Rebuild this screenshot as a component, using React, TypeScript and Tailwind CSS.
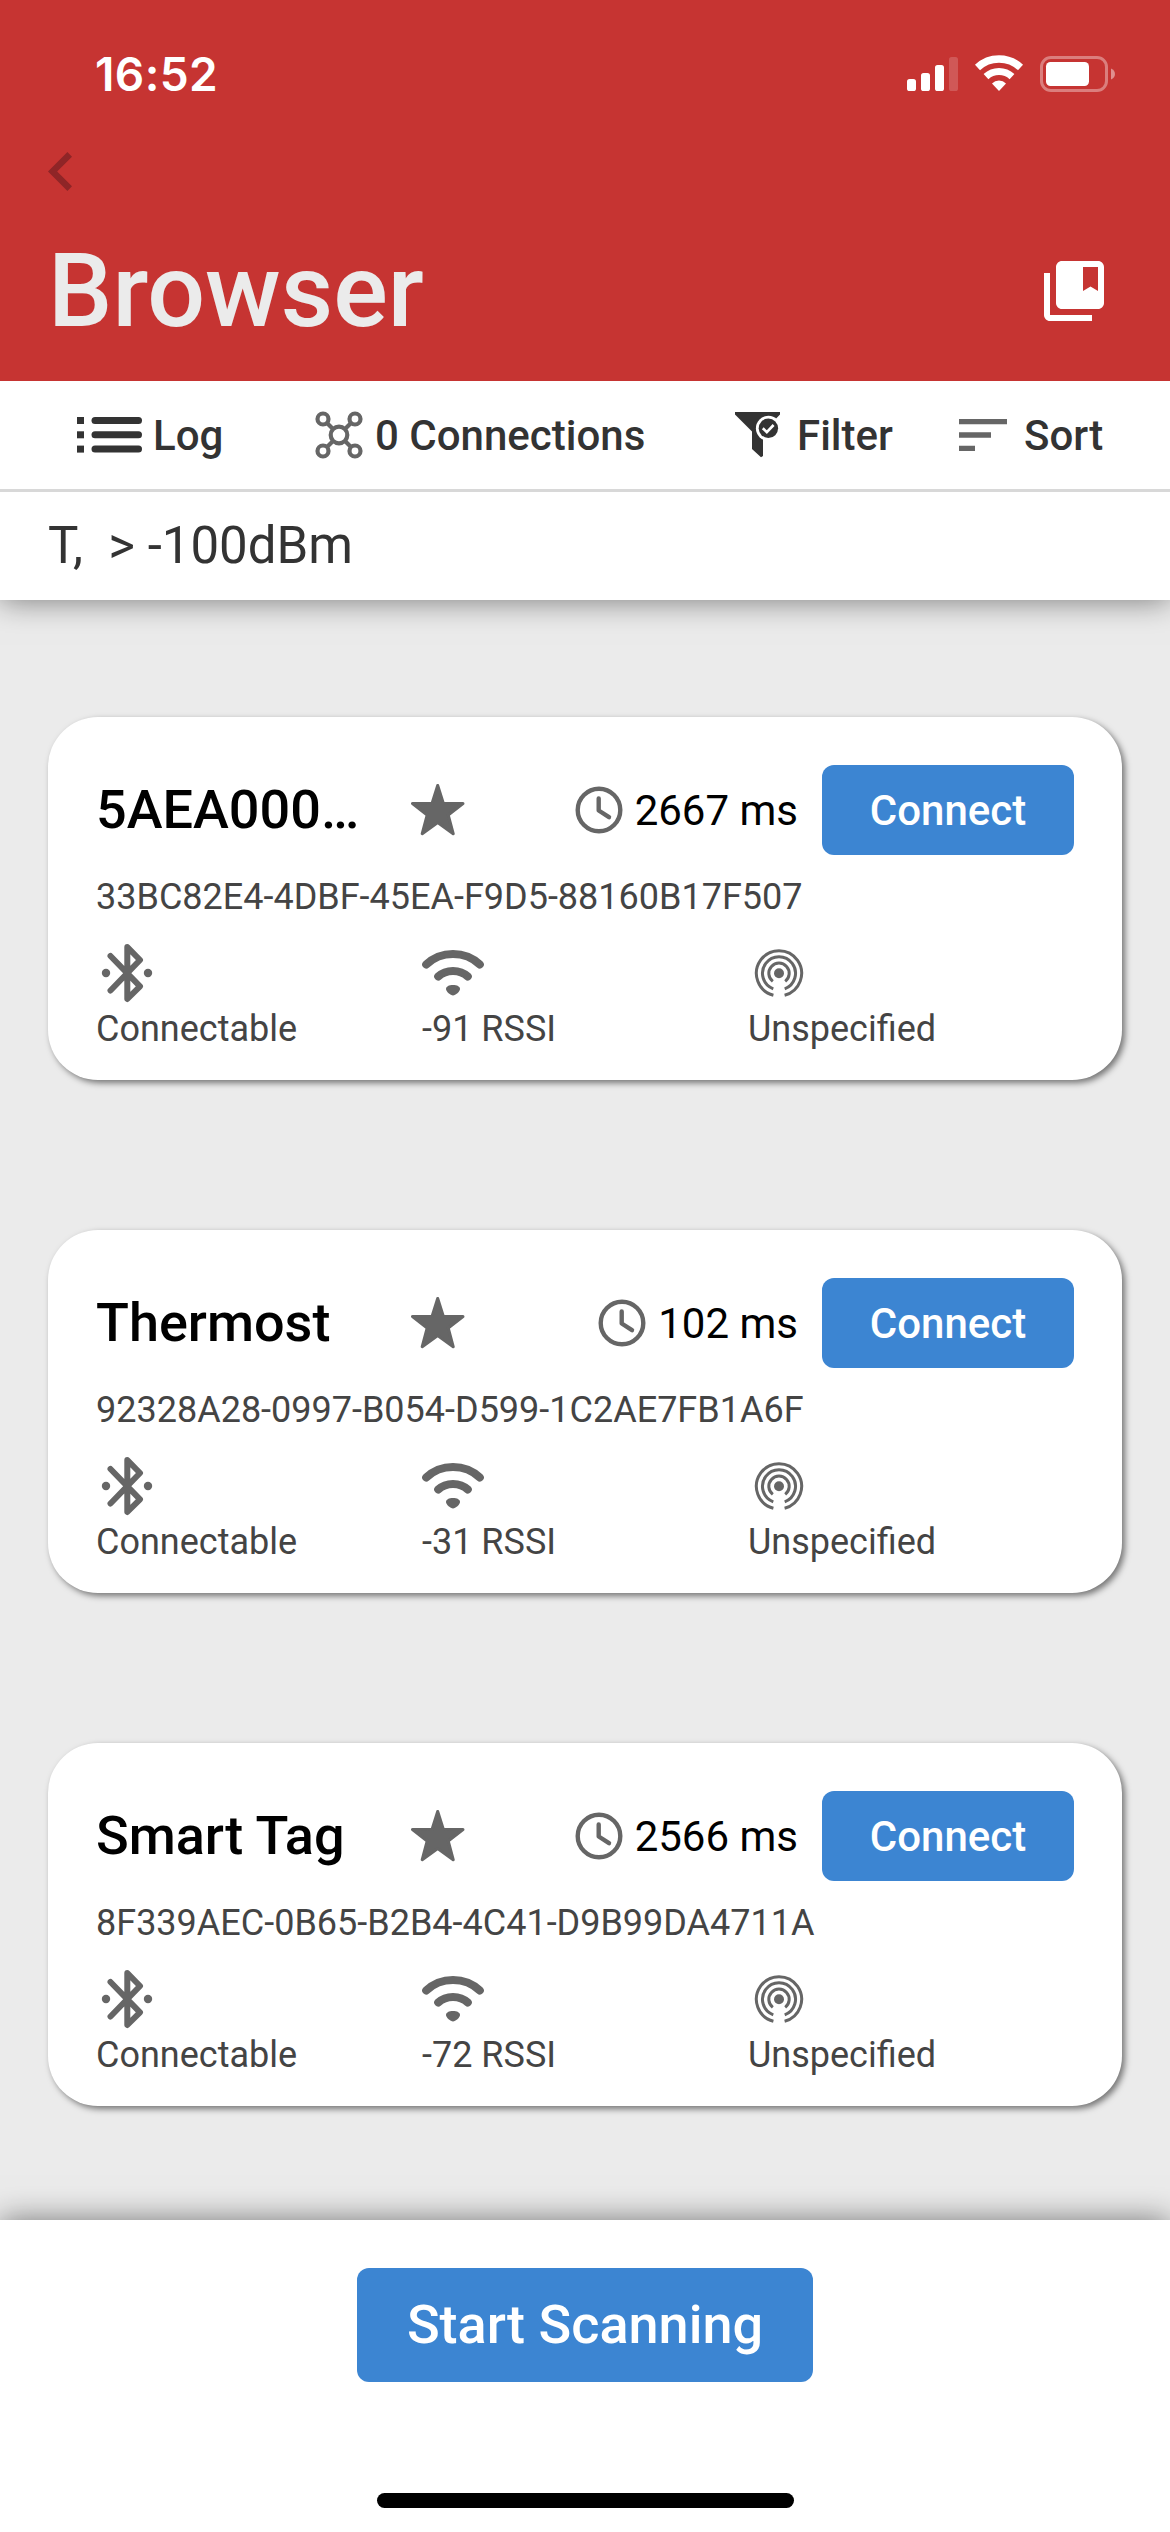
import React from "react";

type Device = { name: string; interval: string; uuid: string; rssi: string };

const devices: Device[] = [
  { name: "5AEA000…", interval: "2667 ms", uuid: "33BC82E4-4DBF-45EA-F9D5-88160B17F507", rssi: "-91 RSSI" },
  { name: "Thermost", interval: "102 ms", uuid: "92328A28-0997-B054-D599-1C2AE7FB1A6F", rssi: "-31 RSSI" },
  { name: "Smart Tag", interval: "2566 ms", uuid: "8F339AEC-0B65-B2B4-4C41-D9B99DA4711A", rssi: "-72 RSSI" },
];

function StatusIcons() {
  return (
    <svg className="h-[40px] w-[210px]" viewBox="906 54 210 40" fill="#fff">
      <rect x="907" y="79" width="9" height="12" rx="2.6" />
      <rect x="921" y="73" width="9" height="18" rx="2.6" />
      <rect x="935" y="65" width="9" height="26" rx="2.6" />
      <rect x="949" y="57" width="9" height="34" rx="2.6" opacity="0.18" />
      <g fill="none" stroke="#fff">
        <path d="M977.5 67.5A31.5 31.5 0 0 1 1020.5 67.5" strokeWidth="7.4" />
        <path d="M986 76.6A19 19 0 0 1 1012 76.6" strokeWidth="7" />
      </g>
      <path d="M999 91L992 83.4A10.2 10.2 0 0 1 1006 83.4Z" />
      <rect x="1041.5" y="57.5" width="65" height="33" rx="9.5" fill="none" stroke="#fff" strokeWidth="3" opacity="0.37" />
      <rect x="1046" y="62" width="43" height="24" rx="4.5" />
      <path d="M1111 68.5C1116.3 70.5 1116.3 77.5 1111 79.5Z" opacity="0.45" />
    </svg>
  );
}

function LogIcon() {
  return (
    <svg className="h-[38px] w-[66px]" viewBox="77 416 66 38" fill="#333">
      {[417, 431.3, 445.6].map((y) => (
        <g key={y}>
          <rect x="77" y={y} width="7" height="7" />
          <rect x="91.5" y={y} width="50.5" height="7" rx="3.5" />
        </g>
      ))}
    </svg>
  );
}

function ConnectionsIcon() {
  return (
    <svg className="h-[48px] w-[48px]" viewBox="0 0 48 48" fill="none" stroke="#666" strokeWidth="4.2">
      <circle cx="24" cy="24" r="8.3" />
      <circle cx="8" cy="8" r="5.5" />
      <circle cx="40" cy="8" r="5.5" />
      <circle cx="8" cy="40" r="5.5" />
      <circle cx="40" cy="40" r="5.5" />
      <path d="M12 12L18 18M36 12L30 18M12 36L18 30M36 36L30 30" />
    </svg>
  );
}

function FilterIcon() {
  return (
    <svg className="h-[46px] w-[46px]" viewBox="735 414 46 46">
      <path d="M735 414H780V416.5L763 434V458L761 459.3L752 451V433.5L735 416.5Z" fill="#333" />
      <circle cx="768.4" cy="430.3" r="12.5" fill="#fff" />
      <circle cx="768.4" cy="430.3" r="9.7" fill="#333" />
      <path d="M762.8 430.3L766.8 434.2L773.6 427" fill="none" stroke="#fff" strokeWidth="2.6" />
    </svg>
  );
}

function StarIcon() {
  return (
    <svg className="h-[52px] w-[54px]" viewBox="411 784 54 52" fill="#666" stroke="#666" strokeWidth="3" strokeLinejoin="round">
      <path d="M437.7 785.5L443.3 803.3L463 803.5L448.200 815L453.2 833.7L437.7 822.500L422.2 833.7L427.200 815L412.5 803.5L432.1 803.3Z" />
    </svg>
  );
}

function ClockIcon() {
  return (
    <svg className="h-[48px] w-[48px]" viewBox="0 0 48 48" fill="none" stroke="#666" strokeWidth="4.4" strokeLinecap="round" strokeLinejoin="round">
      <circle cx="24" cy="24" r="21.3" />
      <path d="M23.7 12.5V24.5L34 31.2" />
    </svg>
  );
}

function BluetoothIcon() {
  return (
    <svg className="h-[60px] w-[52px]" viewBox="101 943 52 60" fill="none" stroke="#666" strokeWidth="6" strokeLinecap="round" strokeLinejoin="round">
      <path d="M110.5 956L140 986.3L127.3 999V947L140 960L110.5 990.5" />
      <circle cx="106" cy="973" r="4.2" fill="#666" stroke="none" />
      <circle cx="148" cy="973" r="4.2" fill="#666" stroke="none" />
    </svg>
  );
}

function WifiIcon() {
  return (
    <svg className="h-[48px] w-[64px]" viewBox="421 949 64 48" fill="none" stroke="#666" strokeWidth="8" strokeLinecap="round">
      <path d="M426.2 964.5C441 950.5 465 950.5 479.8 964.5" />
      <path d="M438.2 976.5C446 969 460 969 467.8 976.5" />
      <path d="M453 985C457 985 460 986.5 460 989C460 991.5 455.5 995.5 453 995.5C450.5 995.5 446 991.5 446 989C446 986.5 449 985 453 985Z" fill="#666" stroke="none" />
    </svg>
  );
}

function BeaconIcon() {
  return (
    <svg className="h-[50px] w-[50px]" viewBox="754.5 948 50 50" fill="none" stroke="#666" strokeWidth="3">
      <circle cx="779.5" cy="973.3" r="5" fill="#666" stroke="none" />
      <path d="M773.3 981.4A10.2 10.2 0 1 1 785.7 981.4" />
      <path d="M773.8 988.8A16.5 16.5 0 1 1 785.2 988.8" />
      <path d="M773.9 995.2A22.6 22.6 0 1 1 785.1 995.2" />
    </svg>
  );
}

function DeviceCard({ device }: { device: Device }) {
  return (
    <article className="h-[363px] rounded-[50px] bg-white px-12 pt-12 shadow-[3px_3px_6px_rgba(0,0,0,0.5)]">
      <div className="flex h-[90px] items-center">
        <h2 className="w-[315px] pb-[2px] whitespace-nowrap text-[54px] font-medium text-black">{device.name}</h2>
        <StarIcon />
        <div className="mr-6 ml-auto flex items-center gap-3">
          <ClockIcon />
          <span className="text-[42px] whitespace-nowrap text-black">{device.interval}</span>
        </div>
        <button className="h-[90px] w-[252px] rounded-xl bg-[#3c85d2] text-[42px] font-medium text-white">Connect</button>
      </div>
      <p className="mt-[21px] text-[36px] leading-[42px] text-[#444]">{device.uuid}</p>
      <div className="mt-[25px] grid grid-cols-3 text-[36px] leading-[42px] text-[#444]">
        <div>
          <div className="ml-[5px] flex h-[60px] items-center"><BluetoothIcon /></div>
          <p className="mt-[5px]">Connectable</p>
        </div>
        <div>
          <div className="-ml-px flex h-[60px] items-center"><WifiIcon /></div>
          <p className="mt-[5px]">{device.rssi}</p>
        </div>
        <div>
          <div className="ml-[6px] flex h-[60px] items-center"><BeaconIcon /></div>
          <p className="mt-[5px]">Unspecified</p>
        </div>
      </div>
    </article>
  );
}

export default function App() {
  return (
    <div className="flex h-[2532px] w-[1170px] flex-col overflow-hidden bg-[#ebebeb] font-[Roboto,sans-serif]">
      <header className="z-20 flex h-[381px] shrink-0 flex-col bg-[#c63432]">
        <div className="flex h-[148px] items-center justify-between pr-[54px] pl-[95px]">
          <span className="font-[Inter,sans-serif] text-[46px] font-semibold tracking-[0.4px] text-white">16:52</span>
          <StatusIcons />
        </div>
        <div className="flex h-[47px] items-center pl-12">
          <svg className="h-[39px] w-[24px]" viewBox="8 6 7.41 12" fill="#8f2527">
            <path d="M15.41 7.41L14 6l-6 6 6 6 1.41-1.41L10.83 12z" />
          </svg>
        </div>
        <div className="mt-[6px] flex h-[180px] items-center justify-between pr-[60px] pl-12">
          <h1 className="text-[102px] font-medium text-[#ebebeb]">Browser</h1>
          <svg className="h-[72px] w-[72px]" viewBox="0 0 24 24" fill="#fff">
            <path d="M20 2H8c-1.1 0-2 .9-2 2v12c0 1.1.9 2 2 2h12c1.1 0 2-.9 2-2V4c0-1.1-.9-2-2-2zm0 10l-2.500-1.500L15 12V4h5v8z" />
            <path d="M4 6H2v14c0 1.1.9 2 2 2h14v-2H4V6z" />
          </svg>
        </div>
      </header>

      <section className="z-10 shrink-0 bg-white text-[#333] shadow-[0_0_30px_rgba(0,0,0,0.5)]">
        <nav className="flex h-[111px] items-center border-b-[3px] border-[#d8d8d8] pl-[77px] text-[42px] font-medium">
          <button className="flex w-[238px] items-center gap-[10px]"><LogIcon />Log</button>
          <button className="flex w-[420px] items-center gap-[12px]"><ConnectionsIcon />0 Connections</button>
          <button className="flex w-[216px] items-center gap-[16px]"><FilterIcon />Filter</button>
          <button className="flex items-center gap-[9px]">
            <svg className="h-[64px] w-[64px]" viewBox="0 0 24 24" fill="#666">
              <path d="M3 18h6v-2H3v2zM3 6v2h18V6H3zm0 7h12v-2H3v2z" />
            </svg>
            Sort
          </button>
        </nav>
        <p className="flex h-[108px] items-center pl-12 text-[51px] whitespace-pre">{"T,  > -100dBm"}</p>
      </section>

      <main className="flex grow flex-col gap-[150px] px-12 pt-[117px]">
        {devices.map((device) => (
          <DeviceCard key={device.uuid} device={device} />
        ))}
      </main>

      <footer className="z-10 flex h-[312px] shrink-0 flex-col items-center justify-between bg-white pt-12 pb-6 shadow-[0_0_30px_rgba(0,0,0,0.5)]">
        <button className="h-[114px] w-[456px] rounded-xl bg-[#3c85d2] pb-[2px] text-[54px] font-medium text-white">Start Scanning</button>
        <div className="h-[15px] w-[417px] rounded-full bg-black" />
      </footer>
    </div>
  );
}
